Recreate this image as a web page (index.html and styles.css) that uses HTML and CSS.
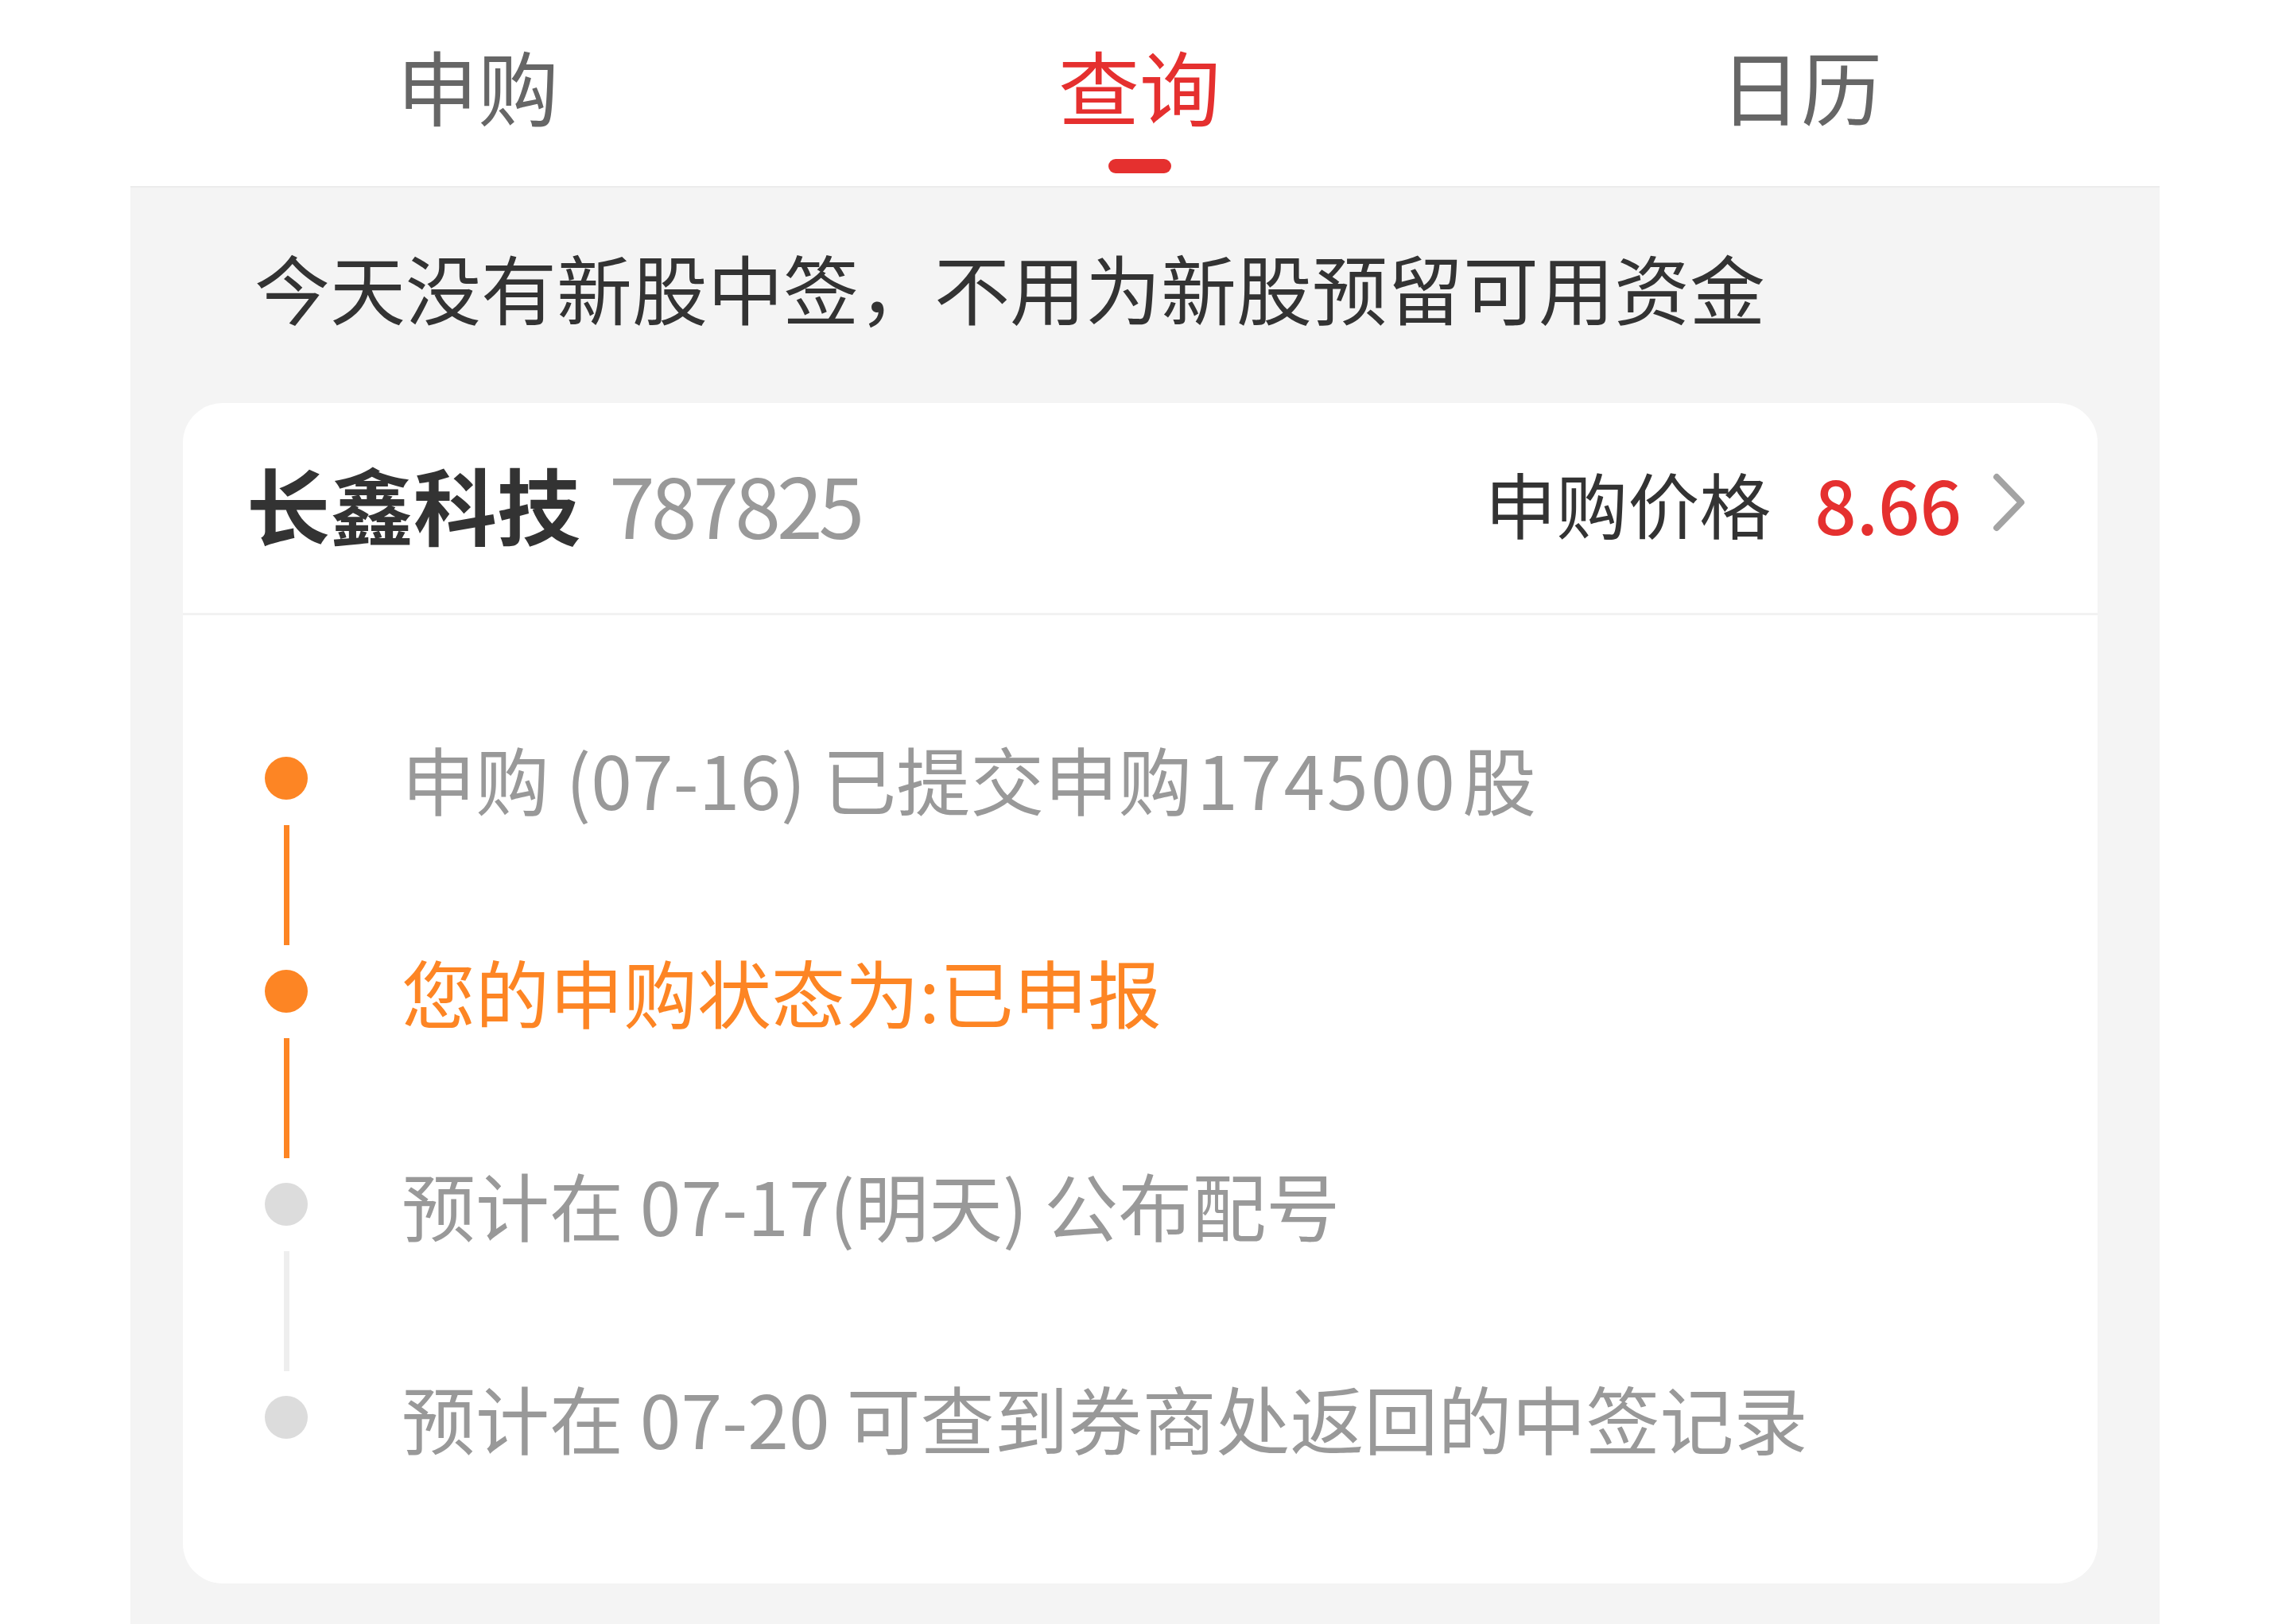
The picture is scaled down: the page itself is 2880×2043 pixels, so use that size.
FILE: index.html
```html
<!DOCTYPE html>
<html lang="zh-CN">
<head>
    <meta charset="UTF-8">
    <meta name="viewport" content="width=device-width, initial-scale=1.0">
    <title>新股查询</title>
    <link rel="stylesheet" href="styles.css">
</head>
<body>
    <div class="tabs">
        <div class="tab">申购</div>
        <div class="tab active">查询</div>
        <div class="tab">日历</div>
    </div>

    <div class="panel">
        <p class="notice">今天没有新股中签，不用为新股预留可用资金</p>

        <div class="card">
            <div class="card-head">
                <div class="stock">
                    <span class="name">长鑫科技</span>
                    <span class="code">787825</span>
                </div>
                <div class="price">
                    <span class="label">申购价格</span>
                    <span class="num">8.66</span>
                    <svg class="arrow" width="41" height="74" viewBox="0 0 41 74">
                        <polyline points="5,5 36,37 5,69" fill="none" stroke="#a3a3a3" stroke-width="8" stroke-linecap="round" stroke-linejoin="round"/>
                    </svg>
                </div>
            </div>

            <ul class="steps">
                <li class="step done">
                    <div class="rail"><i class="dot"></i><i class="line"></i></div>
                    <p>申购 (07-16) 已提交申购<span class="digits">174500</span>股</p>
                </li>
                <li class="step done current">
                    <div class="rail"><i class="dot"></i><i class="line"></i></div>
                    <p>您的申购状态为:已申报</p>
                </li>
                <li class="step">
                    <div class="rail"><i class="dot"></i><i class="line"></i></div>
                    <p>预计在 07-17(明天) 公布配号</p>
                </li>
                <li class="step">
                    <div class="rail"><i class="dot"></i></div>
                    <p>预计在 07-20 可查到券商处返回的中签记录</p>
                </li>
            </ul>
        </div>
    </div>
</body>
</html>
```

FILE: styles.css
```css
* {
    box-sizing: border-box;
}
body {
    margin: 0;
    background: #fff;
    font-family: "Noto Sans CJK SC", "Noto Sans", sans-serif;
    color: #333;
}

/* tabs */
.tabs {
    display: flex;
    height: 234px;
    padding-left: 185px;
}
.tab {
    width: 832px;
    display: flex;
    flex-direction: column;
    align-items: center;
    padding-top: 46px;
    font-size: 102px;
    line-height: 122px;
    color: #666;
}
.tab.active {
    color: #e5302f;
}
.tab.active::after {
    content: "";
    display: block;
    width: 79px;
    height: 18px;
    margin-top: 32px;
    border-radius: 9px;
    background: #e5302f;
}

/* grey area */
.panel {
    width: 2552px;
    margin-left: 164px;
    min-height: calc(100vh - 234px);
    padding: 0 78px 51px 66px;
    background: #f4f4f4;
    border-top: 2px solid #ececec;
}
.notice {
    margin: 0;
    padding: 68px 0 89px 90px;
    font-size: 95px;
    line-height: 114px;
    color: #333;
}

.card {
    background: #fff;
    border-radius: 50px;
    padding-bottom: 154px;
}
.card-head {
    display: flex;
    align-items: center;
    justify-content: space-between;
    height: 267px;
    padding: 0 91px 14px 80px;
    border-bottom: 3px solid #f2f2f2;
}
.stock {
    display: flex;
    align-items: baseline;
}
.name {
    font-size: 105px;
    font-weight: 700;
    color: #333;
}
.code {
    margin-left: 36px;
    font-size: 104px;
    letter-spacing: -5px;
    color: #999;
}
.price {
    display: flex;
    align-items: center;
}
.label {
    font-size: 90px;
    color: #333;
}
.num {
    margin-left: 55px;
    font-size: 92px;
    font-weight: 500;
    color: #e5302f;
}
.arrow {
    margin-left: 39px;
}

/* timeline */
.steps {
    list-style: none;
    margin: 0;
    padding: 150px 0 0 0;
}
.step {
    display: flex;
}
.rail {
    width: 100px;
    margin-left: 80px;
    display: flex;
    flex-direction: column;
    align-items: center;
}
.dot {
    width: 54px;
    height: 54px;
    margin-top: 28px;
    border-radius: 50%;
    background: #dcdcdc;
}
.line {
    width: 7px;
    height: 151px;
    margin: 32px 0 3px;
    background: #eeeeee;
}
.done .dot,
.done .line {
    background: #fd8524;
}
.step p {
    margin: 0 0 0 95px;
    font-size: 93px;
    line-height: 110px;
    color: #999;
}
.step .digits {
    margin: 0 6px;
    letter-spacing: 3px;
}
.current p {
    color: #fd8524;
}
```
